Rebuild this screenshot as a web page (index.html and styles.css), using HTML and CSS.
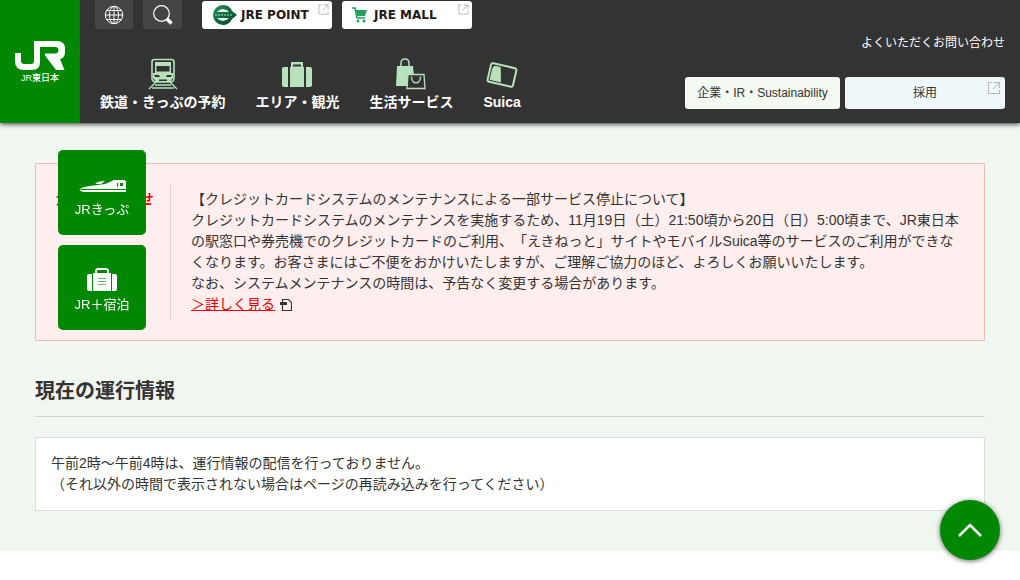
FILE: index.html
```html
<!DOCTYPE html>
<html lang="ja">
<head>
<meta charset="utf-8">
<meta name="viewport" content="width=device-width">
<title>JR東日本</title>
<link rel="stylesheet" href="styles.css">
</head>
<body>
<header class="header">
  <a class="logo" href="#" aria-label="JR東日本">
    <svg class="logo-mark" width="50" height="30" viewBox="0 0 50 30"><path d="M0 12H6V20Q6 23 9 23H16Q19 23 19 20V0H42Q50 0 50 8V11Q50 17 45 18L49.500 29H41L30 14.500V12.500H40Q43.500 12.500 43.500 9Q43.500 6 40 6H25V21Q25 29 17 29H9Q0 29 0 20Z" fill="#fff"/></svg>
    <span class="logo-text">JR東日本</span>
  </a>
  <div class="header-main">
    <div class="tools">
      <button class="tool" type="button" aria-label="Language"><svg width="20" height="20" viewBox="0 0 20 20" fill="none" stroke="#fff"><circle cx="10" cy="10" r="8.7"/><ellipse cx="10" cy="10" rx="4.5" ry="8.7"/><path d="M10 1V19M1 10H19M2.5 5.5H17.5M2.5 14.5H17.5"/></svg></button>
      <button class="tool tool-search" type="button" aria-label="検索"><svg width="20" height="20" viewBox="0 0 20 20" fill="none" stroke="#fff"><circle cx="8.500" cy="8.500" r="7.800" stroke-width="1.200"/><path d="M14 14L18.500 18.500" stroke-width="3.600"/></svg></button>
      <a class="brand brand-point" href="#">
        <svg width="26" height="22" viewBox="0 0 26 22"><defs><linearGradient id="g" x2="1" y2="1"><stop stop-color="#27945a"/><stop offset=".5" stop-color="#0b6a3c"/><stop offset="1" stop-color="#073c26"/></linearGradient></defs><path d="M11 1C16 1 19 4 20 7L25 11L20 15C18 19 15 21 11 21A10 10 0 0 1 11 1Z" fill="url(#g)"/><path d="M5 8Q11 2 17 8ZM5 14Q11 20 17 14Z" fill="#fff"/><path d="M3 11H20" stroke="#b4d8c2" stroke-dasharray="2 1"/></svg>
        <span>JRE POINT</span>
        <svg class="ext" width="11" height="11" viewBox="0 0 12 12"><path d="M4 1H1V11H11V8M6 1H11V6M11 1L5 7"/></svg>
      </a>
      <a class="brand brand-mall" href="#">
        <svg width="16" height="16" viewBox="0 0 16 16"><path d="M0 1H3L5 11H13" fill="none" stroke="#20a35b" stroke-width="1.500"/><path d="M3 3H15L13 9H4.500Z" fill="#20a35b"/><circle cx="6" cy="14" r="1.500" fill="#20a35b"/><circle cx="12" cy="14" r="1.500" fill="#20a35b"/></svg>
        <span>JRE MALL</span>
        <svg class="ext" width="11" height="11" viewBox="0 0 12 12"><path d="M4 1H1V11H11V8M6 1H11V6M11 1L5 7"/></svg>
      </a>
    </div>
    <nav class="nav">
      <a href="#"><svg width="30" height="32" viewBox="0 0 30 32"><path d="M6.500 1.500H23.500Q26 1.500 26 4V20Q26 24 22 24H8Q4 24 4 20V4Q4 1.500 6.500 1.500Z" fill="none" stroke="#b8e2bc" stroke-width="1.600"/><path d="M7 4H23V15H25V20L22 24H8L5 20V15H7Z" fill="#b8e2bc"/><path d="M8.500 8H21.500V13.500H8.500ZM6 17H11L12 19H7ZM24 17H19L18 19H23ZM11 21.500H19V23H11Z" fill="#333"/><path d="M8 24L1 31M22 24L29 31M7 27H23M4 30H26" stroke="#b8e2bc" stroke-width="1.400"/></svg><span>鉄道・きっぷの予約</span></a>
      <a href="#"><svg width="30" height="32" viewBox="0 0 30 32" fill="#b8e2bc"><path d="M2 9H6V29H2Q0 29 0 27V11Q0 9 2 9ZM24 9H28Q30 9 30 11V27Q30 29 28 29H24ZM8 9H9V4H21V9H22V29H8Z"/><path d="M11 6.500H19V8.500H11Z" fill="#333"/></svg><span>エリア・観光</span></a>
      <a href="#"><svg width="30" height="32" viewBox="0 0 30 32"><path d="M1 8H17L19 28H0Z" fill="#b8e2bc"/><path d="M5 9V5Q5 1 9 1Q13 1 13 5V9" fill="none" stroke="#b8e2bc" stroke-width="1.500"/><path d="M12 16.500H28L29 30.500H11Z" fill="#333" stroke="#b8e2bc" stroke-width="1.300"/><path d="M15.500 18.500C15.500 27 24.500 27 24.500 18.500" fill="none" stroke="#b8e2bc" stroke-width="1.400"/></svg><span>生活サービス</span></a>
      <a href="#"><svg width="32" height="32" viewBox="0 0 32 32"><g transform="rotate(13 16 17)" stroke="#b8e2bc"><rect x="3" y="7.500" width="26" height="19" rx="2" fill="none" stroke-width="2"/><path d="M5.500 24V14Q6 10 8 10H12.500L16 24Z" fill="#b8e2bc"/></g></svg><span>Suica</span></a>
    </nav>
  </div>
  <div class="header-side">
    <a class="faq" href="#">よくいただくお問い合わせ</a>
    <div class="side-links">
      <a class="side-link corporate" href="#">企業・IR・Sustainability</a>
      <a class="side-link recruit" href="#">採用<svg class="ext" width="12" height="12" viewBox="0 0 12 12"><path d="M4 .5H.5V11.500H11.500V8M6 .5H11.500V6M11 1L5 7"/></svg></a>
    </div>
  </div>
</header>
<main class="main">
  <section class="notice">
    <h2 class="notice-title">大切なお知らせ</h2>
    <div class="notice-body">
      <p>【クレジットカードシステムのメンテナンスによる一部サービス停止について】<br>クレジットカードシステムのメンテナンスを実施するため、11月19日（土）21:50頃から20日（日）5:00頃まで、JR東日本の駅窓口や券売機でのクレジットカードのご利用、「えきねっと」サイトやモバイルSuica等のサービスのご利用ができなくなります。お客さまにはご不便をおかけいたしますが、ご理解ご協力のほど、よろしくお願いいたします。<br>なお、システムメンテナンスの時間は、予告なく変更する場合があります。</p>
      <a class="more" href="#">＞詳しく見る</a><svg class="page-icon" width="12" height="12" viewBox="0 0 12 12"><path d="M2.500 0V11.500H11.500V3.500L8.500 .5H2.500" fill="none" stroke="#333" stroke-width="1.200"/><path d="M0 3H7V6H0Z" fill="#333"/></svg>
    </div>
  </section>
  <section>
    <h2 class="section-title">現在の運行情報</h2>
    <p class="status">午前2時～午前4時は、運行情報の配信を行っておりません。<br>（それ以外の時間で表示されない場合はページの再読み込みを行ってください）</p>
  </section>
</main>
<aside class="shortcuts">
  <a href="#"><svg width="48" height="24" viewBox="0 0 48 24" fill="#fff"><path d="M1 17Q3 14 12 13L27 11Q32 9 36 7H45Q48 7 48 9V16H4ZM2 17H48V19H8Q3 19 2 17ZM17 11Q20 8 27 8L23 11Z"/><path d="M39 10H40V14H39ZM42 10H45V13H42Z" fill="#008803"/></svg><span>JRきっぷ</span></a>
  <a href="#"><svg width="30" height="24" viewBox="0 0 30 24" fill="#fff"><path d="M2 6H5V23H2Q0 23 0 21V8Q0 6 2 6ZM25 6H28Q30 6 30 8V21Q30 23 28 23H25ZM6 5H24V23H6Z"/><path d="M9 6V3Q9 1 11 1H19Q21 1 21 3V6" fill="none" stroke="#fff" stroke-width="1.800"/><path d="M11 10.500H19M11 13.500H19M11 16.500H19" stroke="#72b475"/></svg><span>JR＋宿泊</span></a>
</aside>
<a class="page-top" href="#" aria-label="ページの先頭へ"><svg width="26" height="16" viewBox="0 0 26 16"><path d="M2 14L13 3L24 14" fill="none" stroke="#fff" stroke-width="2.500"/></svg></a>
</body>
</html>
```

FILE: styles.css
```css
* { box-sizing: border-box; }
body { margin: 0; background: #fff; color: #333; font: 14px/21px "Liberation Sans", "Noto Sans CJK JP", sans-serif; text-spacing-trim: space-all; }
a { color: inherit; text-decoration: none; }
p, h2 { margin: 0; }
svg { display: block; flex: none; }
.header { position: relative; display: flex; background: #333; color: #fff; box-shadow: 0 1px 5px rgba(0,0,0,.8); }
.logo { width: 80px; min-height: 123px; background: #008803; display: flex; flex-direction: column; align-items: center; justify-content: center; gap: 2px; }
.logo-text { font-size: 9px; line-height: 10px; font-weight: 500; }
.header-main { flex: 1; padding: 0 0 10px 15px; }
.tools { display: flex; gap: 10px; align-items: start; }
.tool { width: 38px; height: 29px; padding: 0; border: 0; background: #444; border-radius: 0 0 2px 2px; display: grid; place-items: center; }
.tool-search { width: 39px; }
.brand { position: relative; display: flex; align-items: center; width: 130px; height: 28px; margin-top: 1px; padding-left: 10px; border-radius: 3px; background: #fff; color: #221815; font: bold 12px/14px "DejaVu Sans", sans-serif; }
.brand-point { margin-left: 10px; gap: 3px; }
.brand-mall { gap: 6px; }
.ext { position: absolute; top: 3px; right: 3px; fill: none; stroke: #b5b5b5; }
.nav { display: flex; gap: 30px; padding: 29px 0 0 5px; font-weight: bold; }
.nav a { display: flex; flex-direction: column; align-items: center; gap: 2px; }
.header-side { display: flex; flex-direction: column; justify-content: space-between; align-items: flex-end; padding: 33px 15px 14px 0; font-size: 12px; line-height: 20px; }
.side-links { display: flex; gap: 5px; }
.side-link { position: relative; border-radius: 3px; color: #333; height: 32px; line-height: 32px; text-align: center; }
.corporate { width: 155px; background: #f3faf2; }
.recruit { width: 160px; background: #eef7fa; }
.recruit .ext { top: 5px; right: 5px; }
.main { background: #f0f7f1; padding: 40px 35px; }
.notice { display: flex; background: #fee; border: 1px solid #f2b9b9; padding: 20px; }
.notice-title { width: 115px; padding-top: 5px; flex: none; border-right: 1px solid #ddd0d0; color: #e60000; font-size: 14px; line-height: 21px; }
.notice-body { padding: 5px 0 5px 20px; }
.more { color: #e60000; text-decoration: underline; }
.page-icon { display: inline-block; margin-left: 5px; vertical-align: -2px; }
.section-title { font-size: 20px; line-height: 30px; margin-top: 35px; padding-bottom: 10px; border-bottom: 1px solid #ccd4cd; }
.status { margin-top: 20px; padding: 15px; border: 1px solid #ddd; background: #fff; }
.shortcuts { position: fixed; left: 58px; top: 150px; display: flex; flex-direction: column; gap: 10px; color: #fff; }
.shortcuts a { width: 88px; height: 85px; padding-top: 6px; border-radius: 5px; background: #008803; display: flex; flex-direction: column; align-items: center; justify-content: center; gap: 4px; font-size: 13px; line-height: 18px; }
.page-top { position: fixed; right: 20px; bottom: 20px; width: 60px; height: 60px; border-radius: 50%; background: #008803; box-shadow: 0 1px 5px rgba(0,0,0,.6); display: grid; place-items: center; }
```
